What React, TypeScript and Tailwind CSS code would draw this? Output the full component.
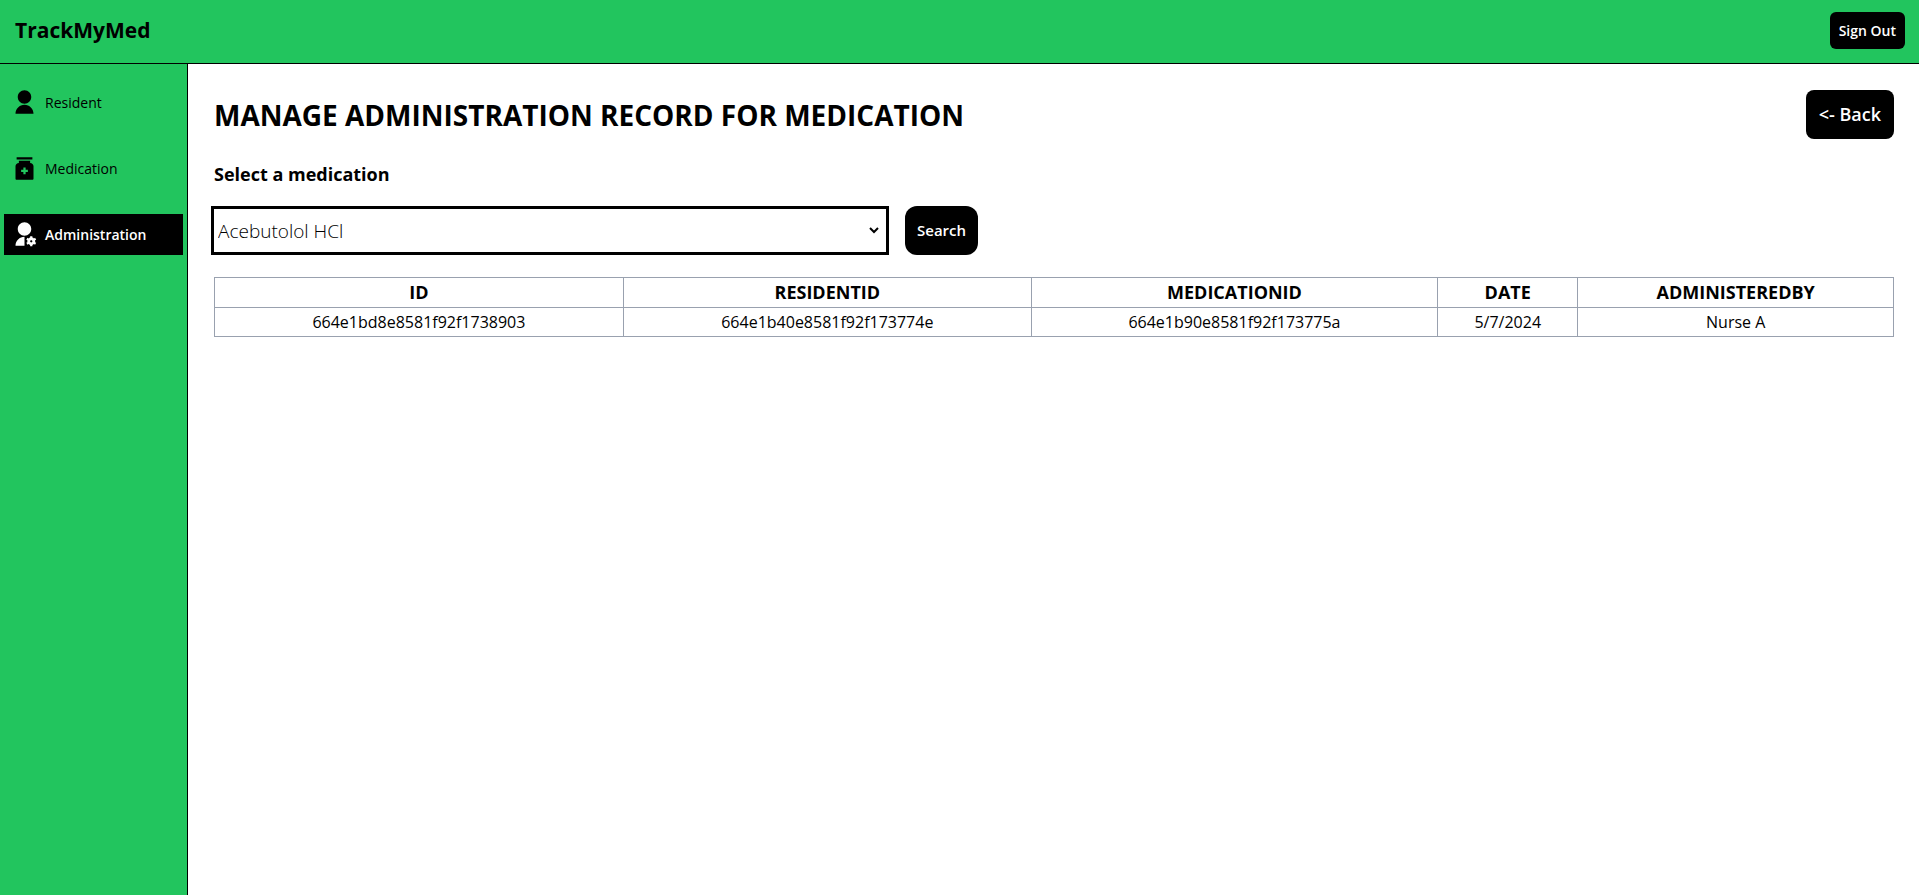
import { RiMedicineBottleFill, RiUserFill, RiUserSettingsFill } from "react-icons/ri";

const navItems = [
  { label: "Resident", Icon: RiUserFill, active: false },
  { label: "Medication", Icon: RiMedicineBottleFill, active: false },
  { label: "Administration", Icon: RiUserSettingsFill, active: true },
];

const columns = [
  { name: "ID", width: "w-[24.35%]" },
  { name: "RESIDENTID", width: "w-[24.3%]" },
  { name: "MEDICATIONID", width: "w-[24.2%]" },
  { name: "DATE", width: "w-[8.35%]" },
  { name: "ADMINISTEREDBY", width: "w-[18.8%]" },
];

const records = [
  ["664e1bd8e8581f92f1738903", "664e1b40e8581f92f173774e", "664e1b90e8581f92f173775a", "5/7/2024", "Nurse A"],
];

function Header() {
  return (
    <header className="flex h-16 items-center justify-between border-b border-black bg-[#22c55e] pr-[14px] pb-0.5 pl-[15px]">
      <h1 className="text-[21px] font-bold">TrackMyMed</h1>
      <button type="button" className="h-[37px] rounded-md bg-black px-[9px] text-[14px] font-semibold text-white">
        Sign Out
      </button>
    </header>
  );
}

function Sidebar() {
  return (
    <nav className="flex w-[188px] shrink-0 flex-col gap-[25px] border-r border-black bg-[#22c55e] px-1 pt-[18px]">
      {navItems.map(({ label, Icon, active }) => (
        <a
          key={label}
          href="#"
          className={
            active
              ? "flex items-center gap-[7px] bg-black p-[7px] text-[14px] font-semibold text-white"
              : "flex items-center gap-[7px] p-[7px] text-[14px] font-medium"
          }
        >
          <Icon size={27} aria-hidden="true" />
          {label}
        </a>
      ))}
    </nav>
  );
}

export default function App() {
  return (
    <div className="flex min-h-screen flex-col bg-white font-['Open_Sans',sans-serif] text-black">
      <Header />
      <div className="flex grow">
        <Sidebar />
        <main className="min-w-0 grow pt-[26px] pr-[25px] pl-[26px]">
          <div className="flex items-center justify-between">
            <h2 className="text-[28px] font-bold">MANAGE ADMINISTRATION RECORD FOR MEDICATION</h2>
            <button type="button" className="h-[49px] rounded-lg bg-black px-[13px] text-[18px] font-semibold text-white">
              &lt;- Back
            </button>
          </div>
          <label htmlFor="medication" className="mt-[22px] block text-[18px] leading-[26px] font-bold">
            Select a medication
          </label>
          <div className="mt-[19px] flex gap-[19px]">
            <select
              id="medication"
              className="my-[3px] h-[43px] w-2/5 border-r-4 border-white bg-white text-[19px] font-light outline-[3px] outline-black"
            >
              <option>Acebutolol HCl</option>
            </select>
            <button type="button" className="h-[49px] rounded-xl bg-black px-3 text-[15px] font-semibold text-white">
              Search
            </button>
          </div>
          <table className="mt-[22px] w-full table-fixed border-collapse text-center">
            <thead>
              <tr>
                {columns.map(({ name, width }) => (
                  <th
                    key={name}
                    scope="col"
                    className={`${width} border border-gray-400 text-[18px] leading-[29px] font-bold`}
                  >
                    {name}
                  </th>
                ))}
              </tr>
            </thead>
            <tbody>
              {records.map((record) => (
                <tr key={record[0]}>
                  {record.map((value) => (
                    <td key={value} className="border border-gray-400 text-[16px] leading-[28px] font-medium">
                      {value}
                    </td>
                  ))}
                </tr>
              ))}
            </tbody>
          </table>
        </main>
      </div>
    </div>
  );
}
